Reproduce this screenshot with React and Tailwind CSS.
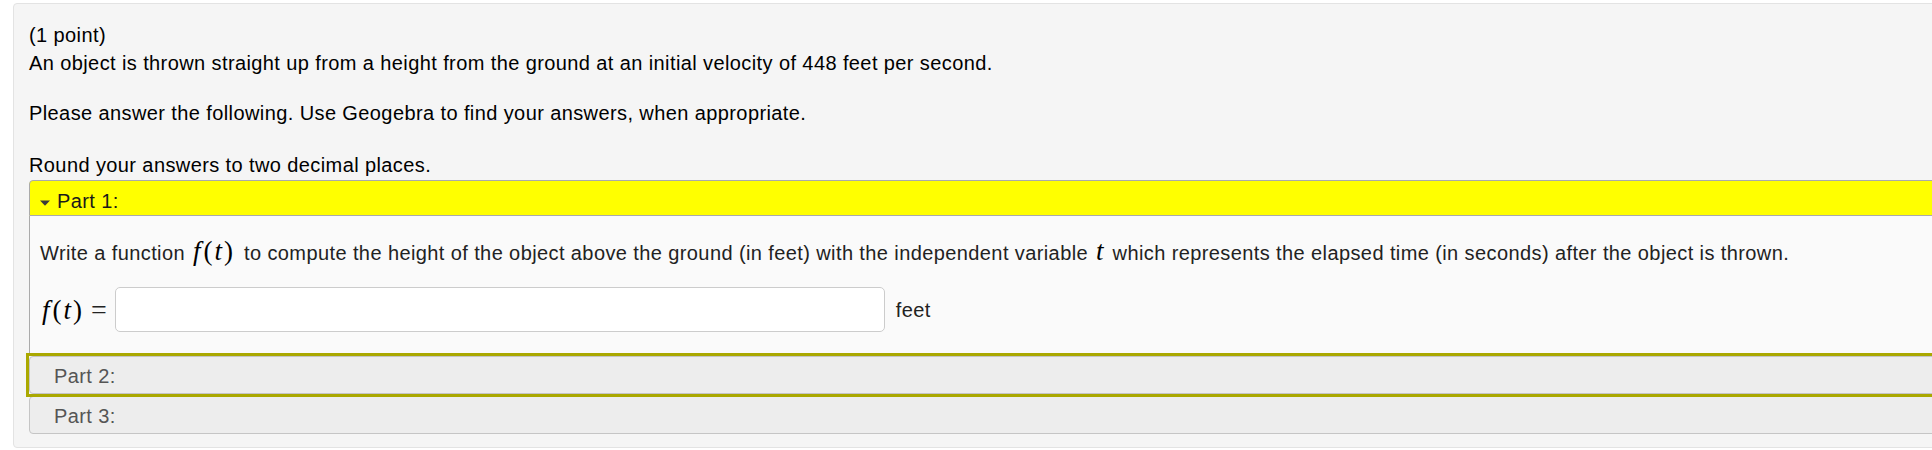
function MathFt() {
  return (
    <span className="text-[27px] leading-[28px] font-['Liberation_Serif',serif] text-black whitespace-nowrap tracking-normal">
      <i className="mr-[3px]">f</i>
      <span>(</span>
      <i className="px-[2px]">t</i>
      <span>)</span>
    </span>
  )
}

function Triangle() {
  return (
    <svg width="10" height="6" viewBox="0 0 10 6" className="mt-[3px]">
      <path d="M0 0.5 H10 L5 5.8 Z" fill="#3a3a3a" />
    </svg>
  )
}

export default function App() {
  return (
    <div className="w-[1932px] h-[450px] overflow-hidden bg-white font-['Liberation_Sans',Arial,sans-serif] text-[20px] leading-[28px] tracking-[0.4px] text-black">
      <div className="ml-[13px] mt-[3px] w-[1960px] bg-[#f5f5f5] border border-[#e3e3e3] rounded-[4px] pl-[15px] pt-[17px] pb-[13px]">
        <p>(1 point)</p>
        <p>An object is thrown straight up from a height from the ground at an initial velocity of 448 feet per second.</p>
        <p className="mt-[22px]">Please answer the following. Use Geogebra to find your answers, when appropriate.</p>
        <p className="mt-[24px]">Round your answers to two decimal places.</p>

        <div className="mt-[1px]">
          <div className="h-[36px] bg-[#ffff00] border border-[#aaaaaa] rounded-t-[4px] pl-[10px] pt-[6px] flex items-start gap-[7px] text-[#1a1a1a]">
            <span className="h-[28px] flex items-center"><Triangle /></span>
            <span>Part 1:</span>
          </div>
          <div className="h-[138px] bg-[#fafafa] border-x border-b border-[#aaaaaa] pl-[10px] pt-[21px] text-[#222]">
            <p className="flex items-baseline">
              <span>Write a function</span>
              <span className="ml-[8px] mr-[11px]"><MathFt /></span>
              <span>to compute the height of the object above the ground (in feet) with the independent variable</span>
              <i className="ml-[8px] mr-[9px] text-[27px] font-['Liberation_Serif',serif] text-black tracking-normal">t</i>
              <span>which represents the elapsed time (in seconds) after the object is thrown.</span>
            </p>
            <div className="mt-[20px] flex items-center">
              <span className="ml-[2px] flex items-center">
                <MathFt />
                <span className="ml-[9px] text-[28px] font-['Liberation_Serif',serif] tracking-normal">=</span>
              </span>
              <input
                type="text"
                className="ml-[8px] w-[770px] h-[45px] bg-white border border-[#cccccc] rounded-[5px] px-2 outline-none"
              />
              <span className="ml-[11px] text-[#222]">feet</span>
            </div>
          </div>

          <div className="mt-[2px] outline-[3px] outline-solid outline-[#aaa800]">
            <div className="h-[38px] bg-[#ededed] border border-[#c5c5c5] rounded-[4px] pl-[24px] pt-[5px] text-[#555]">
              Part 2:
            </div>
          </div>
          <div className="mt-[2px] h-[38px] bg-[#ededed] border border-[#c5c5c5] rounded-[4px] pl-[24px] pt-[5px] text-[#555]">
            Part 3:
          </div>
        </div>
      </div>
    </div>
  )
}
